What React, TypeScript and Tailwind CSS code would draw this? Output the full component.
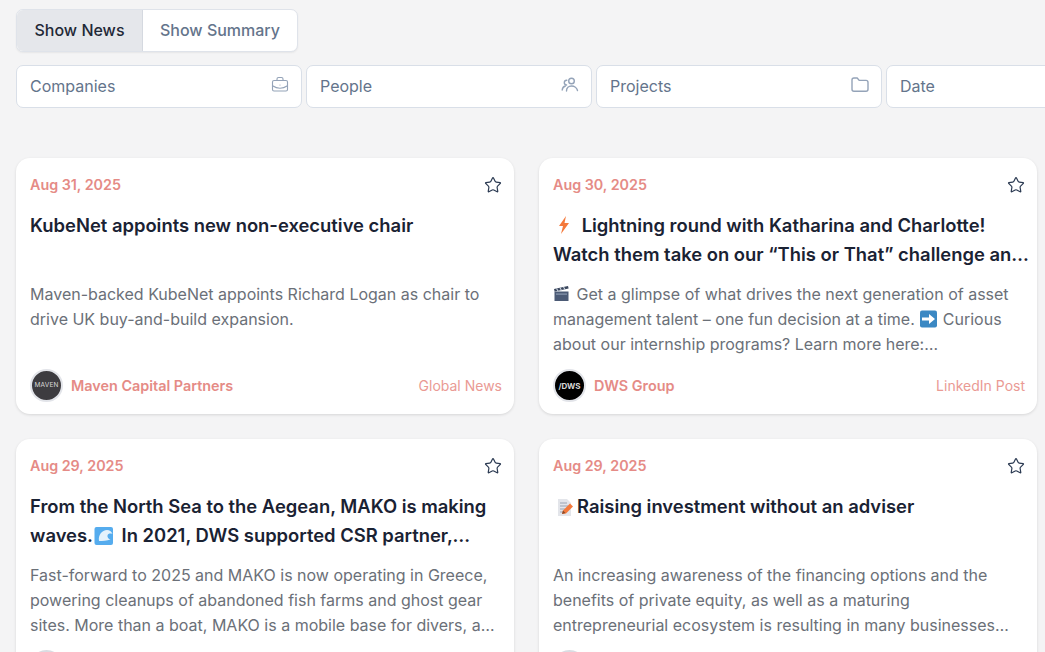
import { BriefcaseBusiness, Star } from 'lucide-react'
import type { ReactNode } from 'react'

function Bolt() {
  return (
    <svg className="inline-block w-[20px] h-[20px] align-[-3px] ml-[1px] mr-[3px]" viewBox="0 0 20 20">
      <path d="M12 1 5 11h4l-2 8 8-11h-4.500z" fill="#f4793b" />
    </svg>
  )
}

function Clapper() {
  return (
    <svg className="inline-block w-[17px] h-[17px] align-[-2px] mr-[2px]" viewBox="0 0 17 17">
      <rect x="1.500" y="6.500" width="14" height="9.500" fill="#4b5a75" />
      <path d="M1 4 15 1l.6 2.600L1.600 6.600z" fill="#39455c" />
      <path d="m3.500 3.500 1.500 2.600M7 2.800l1.500 2.600M10.500 2l1.500 2.600" stroke="#cbd5e1" strokeWidth="1.100" />
      <rect x="3" y="8.500" width="11" height="1.200" fill="#8b99b0" />
    </svg>
  )
}

function ArrowBox() {
  return (
    <svg className="inline-block w-[19px] h-[18px] align-[-3px]" viewBox="0 0 18 18">
      <rect x="0.500" y="0.500" width="17" height="17" rx="2" fill="#3b88c3" />
      <path d="M2.500 7.500h7V4l6 5-6 5v-3.500h-7z" fill="#fff" />
    </svg>
  )
}

function Wave() {
  return (
    <svg className="inline-block w-[20px] h-[20px] align-[-4px] ml-[1px] mr-[3px]" viewBox="0 0 20 20">
      <rect x="0.500" y="1" width="18.500" height="18" rx="2" fill="#55acee" />
      <path d="M5 15c-1-6 3-11 8-11 2.500 0 4.500 1.500 5.500 4-2-1-4.500-.5-5 1.500-.4 1.800 1 3.500 3 4-3.500 1.500-8 1.500-11.500 1.500z" fill="#e4f2fc" />
    </svg>
  )
}

function Memo() {
  return (
    <svg className="inline-block w-[17px] h-[19px] align-[-4px] ml-[4px] mr-[3px]" viewBox="0 0 17 19">
      <path d="M1 1h9l4 4v13H1z" fill="#e3e5ea" />
      <path d="M3 5h7M3 8h8M3 11h5M3 14h3" stroke="#9aa3b2" strokeWidth="1" />
      <path d="m5 16 1-3.500 7-7 3 3-7 7z" fill="#f4793b" />
      <path d="m5 16 1-3.500 2.500 2.500z" fill="#8a4a2a" />
    </svg>
  )
}

function PeopleIcon() {
  return (
    <svg width="18" height="18" viewBox="0 0 18 18" fill="none" stroke="currentColor" strokeWidth="1.400" strokeLinecap="round">
      <circle cx="10.500" cy="5" r="2.800" />
      <path d="M5.500 15c0-3 2.200-5 5-5s5.500 2 6 4.500" />
      <path d="M5.800 4.200A2.400 2.400 0 0 0 5.600 9" />
      <path d="M1.200 14c.2-2 1.300-3.500 3.200-4" />
    </svg>
  )
}

function FolderIcon() {
  return (
    <svg width="18" height="18" viewBox="0 0 18 18" fill="none" stroke="currentColor" strokeWidth="1.400" strokeLinejoin="round">
      <path d="M1 4c0-1.100.9-2 2-2h3.200l2 2.400H15c1.100 0 2 .9 2 2v6.800c0 1.100-.9 2-2 2H3c-1.100 0-2-.9-2-2z" />
    </svg>
  )
}

function MavenLogo() {
  return (
    <div className="w-[33px] h-[33px] rounded-full bg-[#3d3c40] border-2 border-[#e2e4e9] flex items-center justify-center shrink-0 overflow-hidden">
      <span className="text-[6.500px] leading-none text-[#d8d8d8] tracking-[0.2px]">MAVEN</span>
    </div>
  )
}

function DwsLogo() {
  return (
    <div className="w-[33px] h-[33px] rounded-full bg-black border-2 border-[#e2e4e9] flex items-center justify-center shrink-0 overflow-hidden">
      <span className="text-[8px] leading-none font-bold text-[#d8d8d8]">/DWS</span>
    </div>
  )
}

function BlankLogo() {
  return <div className="w-[33px] h-[33px] rounded-full bg-white border-2 border-[#d9dce2] shrink-0" />
}

type Article = {
  date: string
  title: ReactNode
  body: ReactNode
  logo: ReactNode
  company: string
  source: string
}

const articles: Article[] = [
  {
    date: 'Aug 31, 2025',
    title: 'KubeNet appoints new non-executive chair',
    body: 'Maven-backed KubeNet appoints Richard Logan as chair to drive UK buy-and-build expansion.',
    logo: <MavenLogo />,
    company: 'Maven Capital Partners',
    source: 'Global News',
  },
  {
    date: 'Aug 30, 2025',
    title: (
      <>
        <Bolt /> Lightning round with Katharina and Charlotte! Watch them take on our “This or That” challenge and see who comes out on top
      </>
    ),
    body: (
      <>
        <Clapper /> Get a glimpse of what drives the next generation of asset management talent – one fun decision at a time. <ArrowBox /> Curious about our internship programs? Learn more here: https://careers.dws.com/internships
      </>
    ),
    logo: <DwsLogo />,
    company: 'DWS Group',
    source: 'LinkedIn Post',
  },
  {
    date: 'Aug 29, 2025',
    title: (
      <>
        From the North Sea to the Aegean, MAKO is making waves.
        <Wave /> In 2021, DWS supported CSR partner, Healthy Seas, in their mission
      </>
    ),
    body: 'Fast-forward to 2025 and MAKO is now operating in Greece, powering cleanups of abandoned fish farms and ghost gear sites. More than a boat, MAKO is a mobile base for divers, a classroom and more',
    logo: <BlankLogo />,
    company: 'DWS Group',
    source: 'LinkedIn Post',
  },
  {
    date: 'Aug 29, 2025',
    title: (
      <>
        <Memo />
        Raising investment without an adviser
      </>
    ),
    body: 'An increasing awareness of the financing options and the benefits of private equity, as well as a maturing entrepreneurial ecosystem is resulting in many businesses seeking capital directly from investors',
    logo: <BlankLogo />,
    company: 'Maven Capital Partners',
    source: 'Global News',
  },
]

const filters = [
  { label: 'Companies', icon: <BriefcaseBusiness size={18} strokeWidth={1.5} /> },
  { label: 'People', icon: <PeopleIcon /> },
  { label: 'Projects', icon: <FolderIcon /> },
  { label: 'Date', icon: null },
]

function ArticleCard({ article }: { article: Article }) {
  return (
    <div className="h-[256px] bg-white rounded-[14px] shadow-[0_1px_3px_rgba(0,0,0,0.12)] pl-[14px] pr-[12px] pt-[17px] pb-[12px] flex flex-col">
      <div className="flex items-center justify-between h-[20px] shrink-0">
        <span className="text-[14.300px] font-semibold text-[#e58b86]">{article.date}</span>
        <Star size={18} strokeWidth={1.6} className="text-[#2b3a52]" />
      </div>
      <h2 className="mt-[16px] -mr-[4px] h-[58px] shrink-0 text-[18.400px] leading-[29px] font-semibold text-[#1a2233] line-clamp-2">
        {article.title}
      </h2>
      <p className="mt-[13px] h-[75px] shrink-0 text-[16px] leading-[25px] text-[#6b7078] line-clamp-3">
        {article.body}
      </p>
      <div className="mt-auto flex items-center">
        {article.logo}
        <span className="ml-[8px] text-[14.400px] font-semibold text-[#e58b86]">{article.company}</span>
        <span className="ml-auto text-[14px] text-[#ea9a94]">{article.source}</span>
      </div>
    </div>
  )
}

export default function App() {
  return (
    <div className="h-screen overflow-hidden bg-[#f4f4f5] pl-[16px] pt-[9px] font-['Inter',sans-serif]">
      {/* Toggle */}
      <div className="flex w-[282px] h-[43px] rounded-[7px] border border-[#dfe3ea] bg-white overflow-hidden shadow-[0_1px_2px_rgba(0,0,0,0.06)] text-[16px]">
        <div className="w-[126px] pb-[1px] flex items-center justify-center bg-[#e5e7eb] border-r border-[#d5d9e0] font-medium text-[#1f2937]">
          Show News
        </div>
        <div className="flex-1 pb-[1px] flex items-center justify-center text-[#64748b] font-medium">Show Summary</div>
      </div>

      {/* Filters */}
      <div className="mt-[13px] flex gap-[4px] w-[1200px]">
        {filters.map((filter) => (
          <div
            key={filter.label}
            className="w-[286px] h-[43px] pb-[1px] flex items-center justify-between pl-[13px] pr-[12px] bg-white rounded-[7px] border border-[#d9dfe8] text-[16px] text-[#64748b]"
          >
            <span>{filter.label}</span>
            <span className="text-[#94a3b8] -mt-[3px]">{filter.icon}</span>
          </div>
        ))}
      </div>

      {/* News grid */}
      <div className="mt-[50px] grid grid-cols-[498px_498px] gap-x-[25px] gap-y-[25px]">
        {articles.map((article, i) => (
          <ArticleCard key={i} article={article} />
        ))}
      </div>
    </div>
  )
}
